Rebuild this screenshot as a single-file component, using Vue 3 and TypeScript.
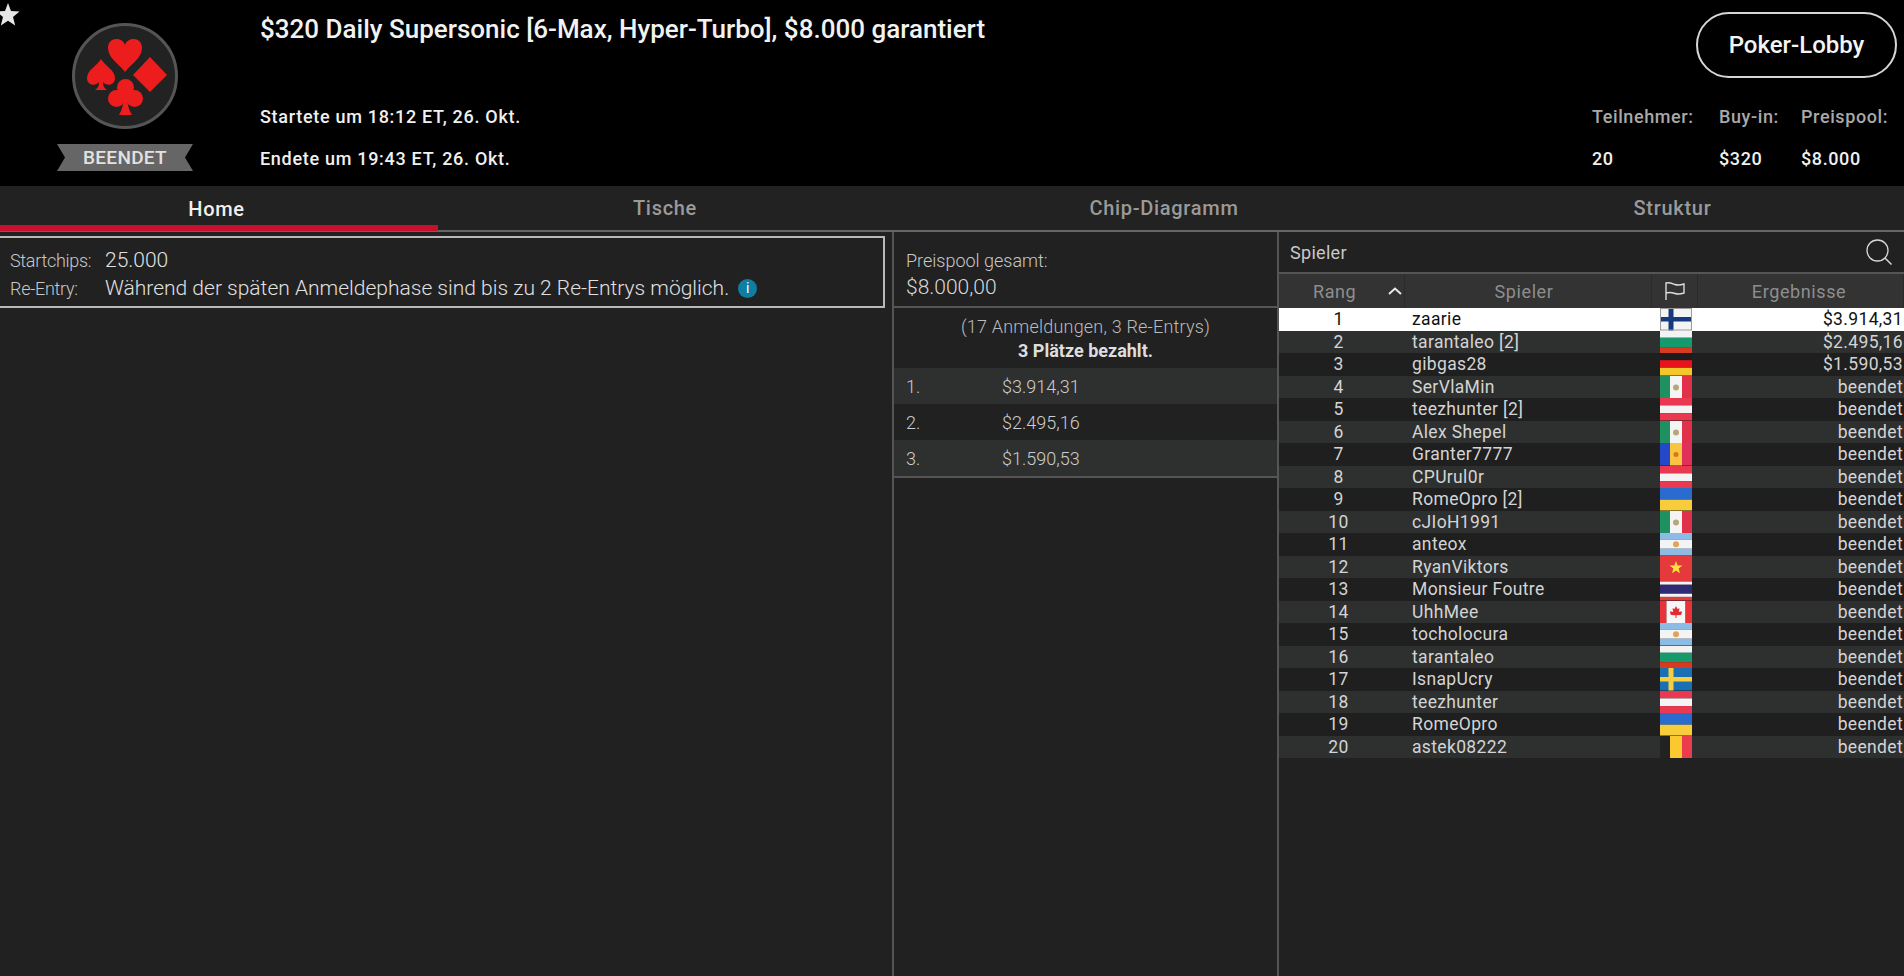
<script setup lang="ts">
type FlagKey = 'fi' | 'bg' | 'de' | 'mx' | 'at' | 'md' | 'ua' | 'ar' | 'vn' | 'th' | 'ca' | 'se' | 'be'
interface Bar { x: number; y: number; w: number; h: number; c: string }

const tabs = [
  { label: 'Home', active: true },
  { label: 'Tische', active: false },
  { label: 'Chip-Diagramm', active: false },
  { label: 'Struktur', active: false },
]

const payouts = [
  { place: '1.', amount: '$3.914,31' },
  { place: '2.', amount: '$2.495,16' },
  { place: '3.', amount: '$1.590,53' },
]

const players: { name: string; flag: FlagKey; result: string }[] = [
  { name: 'zaarie', flag: 'fi', result: '$3.914,31' },
  { name: 'tarantaleo [2]', flag: 'bg', result: '$2.495,16' },
  { name: 'gibgas28', flag: 'de', result: '$1.590,53' },
  { name: 'SerVlaMin', flag: 'mx', result: 'beendet' },
  { name: 'teezhunter [2]', flag: 'at', result: 'beendet' },
  { name: 'Alex Shepel', flag: 'mx', result: 'beendet' },
  { name: 'Granter7777', flag: 'md', result: 'beendet' },
  { name: 'CPUrul0r', flag: 'at', result: 'beendet' },
  { name: 'RomeOpro [2]', flag: 'ua', result: 'beendet' },
  { name: 'cJIoH1991', flag: 'mx', result: 'beendet' },
  { name: 'anteox', flag: 'ar', result: 'beendet' },
  { name: 'RyanViktors', flag: 'vn', result: 'beendet' },
  { name: 'Monsieur Foutre', flag: 'th', result: 'beendet' },
  { name: 'UhhMee', flag: 'ca', result: 'beendet' },
  { name: 'tocholocura', flag: 'ar', result: 'beendet' },
  { name: 'tarantaleo', flag: 'bg', result: 'beendet' },
  { name: 'IsnapUcry', flag: 'se', result: 'beendet' },
  { name: 'teezhunter', flag: 'at', result: 'beendet' },
  { name: 'RomeOpro', flag: 'ua', result: 'beendet' },
  { name: 'astek08222', flag: 'be', result: 'beendet' },
]

const H = 22.5
const hBars = (...parts: [number, string][]): Bar[] => {
  let y = 0
  return parts.map(([p, c]) => {
    const bar = { x: 0, y, w: 32, h: H * p, c }
    y += H * p
    return bar
  })
}
const vBars = (...parts: [number, string][]): Bar[] => {
  let x = 0
  return parts.map(([w, c]) => {
    const bar = { x, y: 0, w, h: H, c }
    x += w
    return bar
  })
}

const flags: Record<FlagKey, Bar[]> = {
  fi: [{ x: 0, y: 0, w: 32, h: H, c: '#f4f4f4' }, { x: 8.5, y: 0, w: 5, h: H, c: '#17397f' }, { x: 0, y: 9, w: 32, h: 4.5, c: '#17397f' }],
  bg: hBars([0.3, '#f2f2f2'], [0.42, '#16996b'], [0.28, '#d9391f']),
  de: hBars([0.32, '#1c1c1c'], [0.34, '#e8141c'], [0.34, '#f5c52c']),
  mx: vBars([10, '#1f9160'], [12, '#f4f4f4'], [10, '#e0304a']),
  at: hBars([0.33, '#e9384f'], [0.34, '#f4f4f4'], [0.33, '#e9384f']),
  md: vBars([10, '#2449c8'], [12, '#f9c440'], [10, '#e0305a']),
  ua: hBars([0.52, '#2a6bd0'], [0.48, '#f8cd3c']),
  ar: hBars([0.3, '#8cbce6'], [0.4, '#f4f4f4'], [0.3, '#8cbce6']),
  vn: [{ x: 0, y: 0, w: 32, h: H, c: '#e43a3c' }],
  th: hBars([0.16, '#e43a3c'], [0.14, '#f4f4f4'], [0.4, '#2f2a74'], [0.14, '#f4f4f4'], [0.16, '#e43a3c']),
  ca: vBars([6.5, '#ea3338'], [19, '#f6f6f6'], [6.5, '#ea3338']),
  se: [{ x: 0, y: 0, w: 32, h: H, c: '#1b70b4' }, { x: 8.5, y: 0, w: 5, h: H, c: '#f6cf3e' }, { x: 0, y: 9, w: 32, h: 4.5, c: '#f6cf3e' }],
  be: vBars([10, '#222222'], [12, '#fcc830'], [10, '#ea3c4c']),
}
</script>

<template>
  <div class="page">
    <svg class="fav" viewBox="0 0 24 24" aria-hidden="true">
      <polygon points="12,1 15,9 23.5,9.5 17,15 19.2,23.5 12,18.8 4.8,23.5 7,15 0.5,9.5 9,9" fill="#e6e6e6" />
    </svg>

    <header class="top">
      <div class="badge">
        <svg class="logo" viewBox="0 0 108 108" aria-hidden="true">
          <circle cx="54" cy="54" r="51.5" fill="#222" stroke="#555" stroke-width="3" />
          <g fill="#ee1d1d">
            <path d="M54 50C48 42 37 36 37 26C37 20 41 17 45.500 17C49.500 17 53 19.500 54 23C55 19.500 58.500 17 62.500 17C67 17 71 20 71 26C71 36 60 42 54 50Z" />
            <path d="M79 35L96 53L79 70L62 53Z" />
            <path d="M30 37C34 44 44 48 44 56C44 63 36 65 32 60C32 64 33 66 36 68H24C27 66 28 64 28 60C24 65 16 63 16 56C16 48 26 44 30 37Z" />
            <circle cx="54.500" cy="65.500" r="8.500" />
            <circle cx="45.500" cy="76.500" r="8.500" />
            <circle cx="63.500" cy="76.500" r="8.500" />
            <path d="M53 72H56C56 82 58 88 61 93H48C51 88 53 82 53 72Z" />
          </g>
        </svg>
        <div class="ribbon">BEENDET</div>
      </div>

      <div class="info">
        <h1 class="title">$320 Daily Supersonic [6-Max, Hyper-Turbo], $8.000 garantiert</h1>
        <div class="times">
          <div>Startete um 18:12 ET, 26. Okt.</div>
          <div>Endete um 19:43 ET, 26. Okt.</div>
        </div>
      </div>

      <div class="side">
        <button class="lobby">Poker-Lobby</button>
        <div class="stats">
          <div class="stat stat-a"><span class="stat-k">Teilnehmer:</span><span class="stat-v">20</span></div>
          <div class="stat stat-b"><span class="stat-k">Buy-in:</span><span class="stat-v">$320</span></div>
          <div class="stat stat-c"><span class="stat-k">Preispool:</span><span class="stat-v">$8.000</span></div>
        </div>
      </div>
    </header>

    <nav class="tabs">
      <div v-for="t in tabs" :key="t.label" class="tab" :class="{ on: t.active }">{{ t.label }}</div>
    </nav>

    <main class="panels">
      <section class="left">
        <div class="details">
          <div class="detail">
            <span class="detail-k">Startchips:</span>
            <span class="detail-v">25.000</span>
          </div>
          <div class="detail">
            <span class="detail-k">Re-Entry:</span>
            <span class="detail-v">Während der späten Anmeldephase sind bis zu 2 Re-Entrys möglich.</span>
            <span class="i-dot">i</span>
          </div>
        </div>
      </section>

      <section class="mid">
        <div class="pool">
          <div class="pool-k">Preispool gesamt:</div>
          <div class="pool-v">$8.000,00</div>
        </div>
        <div class="entries">
          <div>(17 Anmeldungen, 3 Re-Entrys)</div>
          <div class="paid">3 Plätze bezahlt.</div>
        </div>
        <div class="payouts">
          <div v-for="p in payouts" :key="p.place" class="payout">
            <span class="payout-p">{{ p.place }}</span>
            <span>{{ p.amount }}</span>
          </div>
        </div>
      </section>

      <section class="right">
        <div class="right-head">
          <span>Spieler</span>
          <svg class="search" viewBox="0 0 28 26" aria-hidden="true">
            <circle cx="12.500" cy="11.500" r="10.500" fill="none" stroke="#d8d8d8" stroke-width="1.300" />
            <path d="M20 19L26.500 25.500" fill="none" stroke="#d8d8d8" stroke-width="1.500" />
          </svg>
        </div>
        <div class="cols">
          <div class="col c-rank">
            <span class="rank-label">Rang</span>
            <svg class="caret" viewBox="0 0 14 8" aria-hidden="true"><path d="M1 7L7 1.500L13 7" fill="none" stroke="#e8e8e8" stroke-width="2" /></svg>
          </div>
          <div class="col c-name">Spieler</div>
          <div class="col c-flag">
            <svg class="flag-ico" viewBox="0 0 22 20" aria-hidden="true">
              <path d="M2 19V2C6 1 8 2.500 11 3.500C14 4.500 17 4 20 3V12C17 13 14 13.500 11 12.500C8 11.500 5 11 2 12" fill="none" stroke="#dcdcdc" stroke-width="1.400" />
            </svg>
          </div>
          <div class="col c-res">Ergebnisse</div>
        </div>
        <div class="rows">
          <div v-for="(p, i) in players" :key="i" class="row" :class="{ sel: i === 0, alt: i % 2 === 1 }">
            <span class="r-rank">{{ i + 1 }}</span>
            <span class="r-name">{{ p.name }}</span>
            <svg class="flag" viewBox="0 0 32 22.500" preserveAspectRatio="none" aria-hidden="true">
              <rect v-for="(b, j) in flags[p.flag]" :key="j" :x="b.x" :y="b.y" :width="b.w" :height="b.h" :fill="b.c" />
              <circle v-if="p.flag === 'mx'" cx="16" cy="11.500" r="3" fill="#b5a878" />
              <circle v-if="p.flag === 'md'" cx="16" cy="11.500" r="2.500" fill="#d9761c" />
              <circle v-if="p.flag === 'ar'" cx="16" cy="11.250" r="3" fill="#e0a35c" />
              <polygon v-if="p.flag === 'vn'" points="16,5 17.600,9.500 22.500,9.600 18.600,12.600 20,17.200 16,14.500 12,17.200 13.400,12.600 9.500,9.600 14.400,9.500" fill="#fbe23c" />
              <path v-if="p.flag === 'ca'" d="M16 5L17.500 8L19.500 7.300L18.800 11L21.500 10.300L22 12L20.800 14L16.500 14.300V17H15.500V14.300L11.200 14L10 12L10.500 10.300L13.200 11L12.500 7.300L14.500 8Z" fill="#e22c30" />
              <rect v-if="p.flag === 'fi'" x="0.500" y="0.500" width="31" height="21.500" fill="none" stroke="#9a9a9a" />
            </svg>
            <span class="r-res">{{ p.result }}</span>
          </div>
        </div>
      </section>
    </main>
  </div>
</template>

<style>
html, body { margin: 0; background: #212121; }
</style>

<style scoped>
.page {
  width: 1904px;
  height: 976px;
  position: relative;
  overflow: hidden;
  background: #212121;
  color: #cfcfcf;
  font-family: Roboto, "Liberation Sans", sans-serif;
  display: flex;
  flex-direction: column;
}
.fav { position: absolute; left: -4px; top: 2px; width: 24px; height: 24px; }

.top { height: 186px; background: #000; display: flex; flex: none; }
.badge { width: 250px; padding-top: 22px; box-sizing: border-box; display: flex; flex-direction: column; align-items: center; }
.logo { width: 108px; height: 108px; }
.ribbon {
  margin-top: 14px;
  width: 136px;
  height: 27px;
  background: #666;
  color: #e2e2e2;
  font-size: 19px;
  font-weight: 500;
  letter-spacing: 0.3px;
  line-height: 28px;
  text-align: center;
  clip-path: polygon(0 100%, 8px 50%, 0 0, 100% 0, calc(100% - 8px) 50%, 100% 100%);
}
.info { flex: 1; padding: 0 0 0 10px; display: flex; flex-direction: column; color: #f0f0f0; }
.title { margin: 15px 0 0; font-size: 26px; line-height: 28px; font-weight: 500; color: #f2f2f2; }
.times { margin-top: 53px; font-size: 18px; letter-spacing: 0.7px; line-height: 42px; font-weight: 500; }
.side { width: 311px; position: relative; flex: none; display: flex; flex-direction: column; padding: 12px 7px 0 0; box-sizing: border-box; align-items: flex-end; }
.lobby {
  width: 201px;
  height: 66px;
  border: 2px solid #d6d6d6;
  border-radius: 33px;
  background: #000;
  color: #f4f4f4;
  font: 500 24px Roboto, sans-serif;
  padding: 0;
}
.stats { display: flex; margin-top: 18px; width: 305px; font-size: 18px; letter-spacing: 0.6px; font-weight: 500; }
.stat { display: flex; flex-direction: column; line-height: 42px; }
.stat-a { width: 127px; }
.stat-b { width: 82px; }
.stat-k { color: #a9a9a9; }
.stat-v { color: #f0f0f0; }

.tabs {
  height: 44px;
  flex: none;
  display: grid;
  grid-template-columns: 438px 454px 544px 468px;
  grid-template-rows: 44px;
  border-bottom: 2px solid #666;
  box-sizing: content-box;
  background: #222;
}
.tab {
  text-align: center;
  font-size: 20px;
  letter-spacing: 0.7px;
  font-weight: 500;
  line-height: 45px;
  color: #9a9a9a;
}
.tab:last-child { padding-left: 5px; }
.tab.on {
  box-sizing: border-box;
  color: #f0f0f0;
  box-shadow: inset 0 -6px 0 #c8102e;
  margin-bottom: -1px;
  padding: 1px 5px 0 0;
}

.panels { flex: 1; display: grid; grid-template-columns: 892px 385px 627px; min-height: 0; }
.left { padding-top: 4px; }
.details {
  width: 885px;
  height: 72px;
  box-sizing: border-box;
  border: 2px solid #b8b8b8;
  border-left: 0;
  padding: 8px 0 0 10px;
}
.detail { display: flex; align-items: center; height: 28px; }
.detail-k { width: 95px; font-size: 18px; letter-spacing: -0.3px; font-weight: 300; color: #c8c8c8; }
.detail-v { font-size: 21px; font-weight: 300; color: #e0e0e0; }
.i-dot {
  width: 19px;
  height: 19px;
  margin-left: 9px;
  border-radius: 50%;
  background: #0f7ea3;
  color: #fff;
  font-size: 14px;
  line-height: 19px;
  text-align: center;
}

.mid { border-left: 2px solid #555; }
.pool { height: 76px; box-sizing: border-box; padding: 17px 0 0 12px; border-bottom: 2px solid #555; }
.pool-k { font-size: 18px; line-height: 24px; font-weight: 300; color: #c8c8c8; }
.pool-v { font-size: 21px; line-height: 29px; font-weight: 300; color: #d8d8d8; }
.entries { height: 60px; padding-top: 7px; box-sizing: border-box; text-align: center; font-size: 18px; letter-spacing: 0.2px; line-height: 24px; font-weight: 300; color: #bbb; }
.paid { letter-spacing: 0; font-weight: 700; color: #dedede; }
.payouts { border-bottom: 2px solid #555; }
.payout { height: 36px; display: flex; align-items: center; padding-left: 12px; font-size: 18px; font-weight: 300; color: #ccc; }
.payout:nth-child(odd) { background: #2e3030; }
.payout-p { width: 96px; }

.right { border-left: 2px solid #555; display: flex; flex-direction: column; }
.right-head { height: 42px; flex: none; box-sizing: border-box; display: flex; align-items: center; justify-content: space-between; padding: 0 11px 0 11px; font-size: 18px; letter-spacing: 0.3px; color: #c8c8c8; border-bottom: 2px solid #555; }
.search { width: 28px; height: 26px; }
.cols { height: 34px; flex: none; display: grid; grid-template-columns: 126px 247px 46px 1fr; background: #333; font-size: 18px; color: #8e8e8e; letter-spacing: 0.6px; }
.col { display: flex; align-items: center; justify-content: center; border-right: 1px solid #2a2a2a; }
.c-rank { justify-content: flex-start; padding-left: 34px; }
.c-name { padding-right: 8px; }
.c-res { padding-right: 3px; }
.rank-label { width: 75px; }
.caret { width: 14px; height: 8px; }
.flag-ico { width: 22px; height: 20px; }
.rows { flex: none; }
.row {
  height: 22.5px;
  display: grid;
  grid-template-columns: 126px 255px 32px 1fr;
  align-items: center;
  font-size: 17.5px;
  letter-spacing: 0.35px;
  line-height: 22px;
  color: #d4d4d4;
  background: #1f1f1f;
}
.row.alt { background: #2e3030; }
.row.sel { background: #fff; color: #111; }
.r-rank { text-align: center; padding-right: 7px; }
.r-name { padding-left: 7px; white-space: nowrap; }
.flag { width: 32px; height: 22.5px; display: block; }
.r-res { text-align: right; padding-right: 1px; }
</style>
